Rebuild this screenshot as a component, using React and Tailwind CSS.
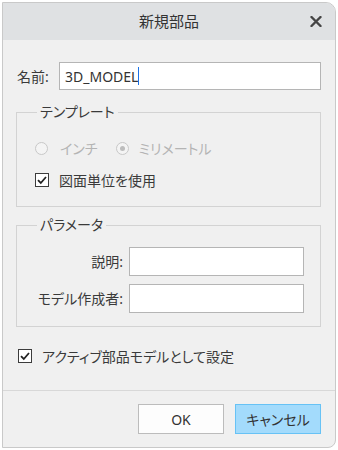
import React from 'react';

function CheckBox() {
  return (
    <span className="flex h-[14px] w-[14px] items-center justify-center border border-[#3c3c3c] bg-white">
      <svg width="12" height="12" viewBox="0 0 12 12">
        <path d="M2 6.2 L4.8 9 L10 3" fill="none" stroke="#222" strokeWidth="1.8" />
      </svg>
    </span>
  );
}

function Radio({ checked }) {
  return (
    <span className="flex h-[13px] w-[13px] items-center justify-center rounded-full border border-[#c8c8c8] bg-[#f4f4f4]">
      {checked && <span className="h-[5px] w-[5px] rounded-full bg-[#bdbdbd]" />}
    </span>
  );
}

function Group({ title, children, className }) {
  return (
    <fieldset className={`m-0 border border-[#d3d3d3] p-0 ${className}`}>
      <legend className="ml-[20px] px-[3px] leading-[20px] text-[#3a3a3a]">{title}</legend>
      {children}
    </fieldset>
  );
}

export default function App() {
  return (
    <div className="h-[450px] w-[338px] bg-white p-[2px] text-[14px] text-[#3a3a3a] [font-family:'Noto_Sans','Noto_Sans_CJK_JP',sans-serif] [font-feature-settings:'palt']">
      <div className="flex h-full flex-col overflow-hidden rounded-tr-[10px] rounded-br-[8px] border border-[#c9c9c9] bg-[#f0f0f0]">
        <div className="relative flex h-[37px] items-center justify-center bg-[#dfe1e3] text-[15px] text-[#333]">
          新規部品
          <svg className="absolute right-[13px]" width="12" height="11" viewBox="0 0 12 11">
            <path d="M1.5 1 L10.5 10 M10.5 1 L1.5 10" stroke="#444" strokeWidth="2.4" strokeLinecap="round" />
          </svg>
        </div>

        <div className="flex-1 pl-[13px] pr-[14px] pt-[22px]">
          <div className="flex h-[28px] items-center">
            <span className="w-[43px] pl-[1px]">名前:</span>
            <div className="flex h-[28px] flex-1 items-center border border-[#b5b5b5] bg-white px-[5px]">
              <span className="text-[#333]">3D_MODEL</span>
              <span className="h-[18px] w-[1px] bg-[#1a73e8]" />
            </div>
          </div>

          <Group title="テンプレート" className="mt-[12px]">
            <div className="flex flex-col gap-[12px] pb-[16px] pl-[18px] pt-[16px]">
              <div className="flex h-[20px] items-center text-[#b4b4b4]">
                <Radio />
                <span className="ml-[12px]">インチ</span>
                <span className="ml-[18px]"><Radio checked /></span>
                <span className="ml-[10px]">ミリメートル</span>
              </div>
              <div className="flex h-[20px] items-center">
                <CheckBox />
                <span className="ml-[10px]">図面単位を使用</span>
              </div>
            </div>
          </Group>

          <Group title="パラメータ" className="mt-[8px]">
            <div className="grid grid-cols-[106px_175px] items-center gap-x-[6px] gap-y-[8px] pb-[13px] pt-[12px]">
              <span className="text-right">説明:</span>
              <div className="h-[29px] border border-[#b5b5b5] bg-white" />
              <span className="text-right">モデル作成者:</span>
              <div className="h-[29px] border border-[#b5b5b5] bg-white" />
            </div>
          </Group>

          <div className="ml-[2px] mt-[19px] flex h-[20px] items-center">
            <CheckBox />
            <span className="ml-[10px]">アクティブ部品モデルとして設定</span>
          </div>
        </div>

        <div className="flex h-[57px] justify-end gap-[11px] border-t border-[#d8d8d8] pr-[14px] pt-[13px]">
          <button className="h-[30px] w-[86px] border border-[#bcbcbc] bg-[#fdfdfd] text-[#333]">OK</button>
          <button className="h-[30px] w-[86px] border border-[#67c2f5] bg-[#a3dbfc] text-[#333]">キャンセル</button>
        </div>
      </div>
    </div>
  );
}
